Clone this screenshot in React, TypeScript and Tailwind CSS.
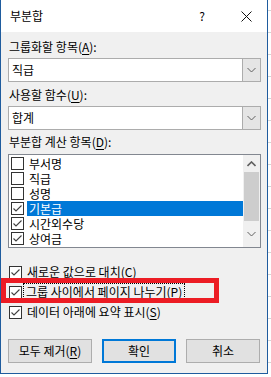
import type { ReactNode } from 'react';

const items = [
  { label: '부서명', checked: false },
  { label: '직급', checked: false },
  { label: '성명', checked: false },
  { label: '기본급', checked: true, selected: true },
  { label: '시간외수당', checked: true },
  { label: '상여금', checked: true },
];

function U({ children }: { children: ReactNode }) {
  return <span className="underline underline-offset-2">{children}</span>;
}

function Box({ checked }: { checked: boolean }) {
  return (
    <span className="flex h-[13px] w-[13px] shrink-0 items-center justify-center border border-[#333333] bg-white">
      {checked && (
        <svg width="11" height="11" viewBox="0 0 11 11">
          <path d="M1.5 5.5 L4 8 L9.5 2.5" fill="none" stroke="#404040" strokeWidth="1.1" />
        </svg>
      )}
    </span>
  );
}

function Chevron({ up = false }: { up?: boolean }) {
  return (
    <svg width="9" height="6" viewBox="0 0 9 6">
      <path
        d={up ? 'M0.5 5 L4.5 1 L8.5 5' : 'M0.5 1 L4.5 5 L8.5 1'}
        fill="none"
        stroke="#606060"
        strokeWidth={up ? 1.6 : 1}
      />
    </svg>
  );
}

function Combo({ value }: { value: string }) {
  return (
    <div className="flex h-[24px] w-[253px] border border-[#acacac] bg-white">
      <div className="flex flex-1 items-center pl-[3px]">{value}</div>
      <div className="flex w-[18px] items-center justify-center border-l border-[#acacac] bg-[#e5e5e5]">
        <Chevron />
      </div>
    </div>
  );
}

export default function App() {
  return (
    <div className="flex h-[377px] w-[271px] flex-col bg-white font-['Noto_Sans_CJK_KR','Noto_Sans',sans-serif] text-[12px] leading-[16px] text-black">
      <div className="flex">
        <div className="relative flex h-[374px] w-[268px] flex-col border-x border-b border-[#1f5c9e] bg-[#f0f0f0]">
          {/* title bar */}
          <div className="flex h-[32px] items-center bg-white">
            <span className="pl-[9px]">부분합</span>
            <span className="ml-auto mr-[36px]">?</span>
            <svg className="mr-[15px]" width="11" height="11" viewBox="0 0 11 11">
              <path d="M0.5 0.5 L10.5 10.5 M10.5 0.5 L0.5 10.5" stroke="#111" strokeWidth="1" />
            </svg>
          </div>

          <div className="flex flex-col pl-[7px]">
            <div className="mt-[7px] pl-[1px]">
              그룹화할 항목(<U>A</U>):
            </div>
            <div className="mt-[3px]">
              <Combo value="직급" />
            </div>

            <div className="mt-[5px] pl-[1px]">
              사용할 함수(<U>U</U>):
            </div>
            <div className="mt-[3px]">
              <Combo value="합계" />
            </div>

            <div className="mt-[4px] pl-[1px]">
              부분합 계산 항목(<U>D</U>):
            </div>
            <div className="mt-[4px] flex h-[94px] w-[253px] border border-[#828790] bg-white">
              <div className="flex flex-1 flex-col pt-[1px]">
                {items.map((it) => (
                  <div key={it.label} className="flex h-[15px] items-center pl-[2px] leading-[15px]">
                    <Box checked={it.checked} />
                    <span
                      className={`ml-[3px] flex h-[15px] flex-1 items-center pl-[2px] ${
                        it.selected ? 'bg-[#0078d7] text-white' : ''
                      }`}
                    >
                      {it.label}
                    </span>
                  </div>
                ))}
              </div>
              <div className="flex w-[17px] flex-col items-center bg-[#f0f0f0]">
                <div className="flex h-[17px] items-center justify-center">
                  <Chevron up />
                </div>
                <div className="h-[49px] w-[15px] bg-[#cdcdcd]" />
                <div className="flex flex-1 items-center justify-center">
                  <Chevron />
                </div>
              </div>
            </div>

            <div className="mt-[14px] flex h-[20px] items-center pl-[1px]">
              <Box checked />
              <span className="ml-[5px]">
                새로운 값으로 대치(<U>C</U>)
              </span>
            </div>
            <div className="flex h-[20px] items-center pl-[1px]">
              <Box checked />
              <span className="ml-[2px] px-[2px] outline outline-1 outline-dotted outline-black">
                그룹 사이에서 페이지 나누기(<U>P</U>)
              </span>
            </div>
            <div className="flex h-[20px] items-center pl-[1px]">
              <Box checked />
              <span className="ml-[5px]">
                데이터 아래에 요약 표시(<U>S</U>)
              </span>
            </div>

            <div className="mt-[17px] flex gap-[10px]">
              <button className="flex h-[24px] w-[84px] items-center justify-center border border-[#adadad] bg-[#e1e1e1]">
                모두 제거(<U>R</U>)
              </button>
              <button className="flex h-[24px] w-[74px] items-center justify-center border-2 border-[#0078d7] bg-[#e1e1e1]">
                확인
              </button>
              <button className="flex h-[24px] w-[74px] items-center justify-center border border-[#adadad] bg-[#e1e1e1]">
                취소
              </button>
            </div>
          </div>

          {/* red annotation frame */}
          <div className="absolute left-0 top-[278px] h-[25px] w-[218px] border-[5px] border-[#ec1c24]" />
        </div>

        {/* spreadsheet behind the dialog */}
        <div className="flex w-[3px] flex-col pt-[10px]">
          {Array.from({ length: 17 }).map((_, i) => (
            <div key={i} className="h-[22px] shrink-0 border-t border-[#d4d4d4]" />
          ))}
        </div>
      </div>
      <div className="flex h-[3px]">
        <div className="w-[73px] border-r border-[#d4d4d4]" />
        <div className="w-[72px] border-r border-[#d4d4d4]" />
        <div className="w-[72px] border-r border-[#d4d4d4]" />
      </div>
    </div>
  );
}
